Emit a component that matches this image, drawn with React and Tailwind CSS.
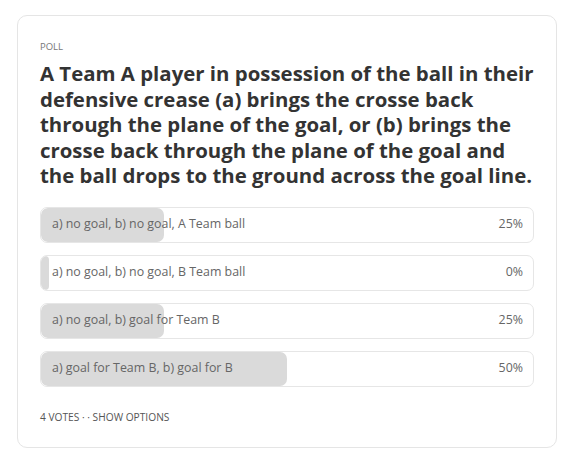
export default function App() {
  const options = [
    { label: "a) no goal, b) no goal, A Team ball", pct: 25 },
    { label: "a) no goal, b) no goal, B Team ball", pct: 0 },
    { label: "a) no goal, b) goal for Team B", pct: 25 },
    { label: "a) goal for Team B, b) goal for B", pct: 50 },
  ];
  const lines = [
    "A Team A player in possession of the ball in their",
    "defensive crease (a) brings the crosse back",
    "through the plane of the goal, or (b) brings the",
    "crosse back through the plane of the goal and",
    "the ball drops to the ground across the goal line.",
  ];
  return (
    <div className="w-[579px] h-[463px] bg-white pt-[15px] pl-[17px]" style={{ fontFamily: '"Open Sans", "Noto Sans", sans-serif' }}>
      <div className="w-[540px] h-[433px] border border-[#e5e5e5] rounded-[10px] pt-[25px] pl-[22px] pr-[22px]">
        <div className="text-[9.5px] leading-[12px] text-[#777] uppercase">Poll</div>
        <h1 className="mt-[8px] mr-[-10px] text-[20.4px] leading-[25.5px] font-bold text-[#333]">
          {lines.map((l, i) => (
            <span key={i} className="block whitespace-nowrap">{l}</span>
          ))}
        </h1>
        <div className="mt-[18px] flex flex-col gap-[12px]">
          {options.map((o, i) => (
            <div key={i} className="relative h-[36px] rounded-[7px] border border-[#e6e6e6] overflow-hidden">
              <div
                className="absolute left-0 top-0 bottom-0 bg-[#dadada] rounded-[7px]"
                style={{ width: o.pct === 0 ? "8px" : `${o.pct}%` }}
              />
              <div className="relative flex items-center justify-between h-full pl-[11px] pr-[10px] text-[12.4px] text-[#666]">
                <span>{o.label}</span>
                <span>{o.pct}%</span>
              </div>
            </div>
          ))}
        </div>
        <div className="mt-[24px] text-[10.2px] leading-[12px] text-[#555] uppercase">4 votes · · Show options</div>
      </div>
    </div>
  );
}
